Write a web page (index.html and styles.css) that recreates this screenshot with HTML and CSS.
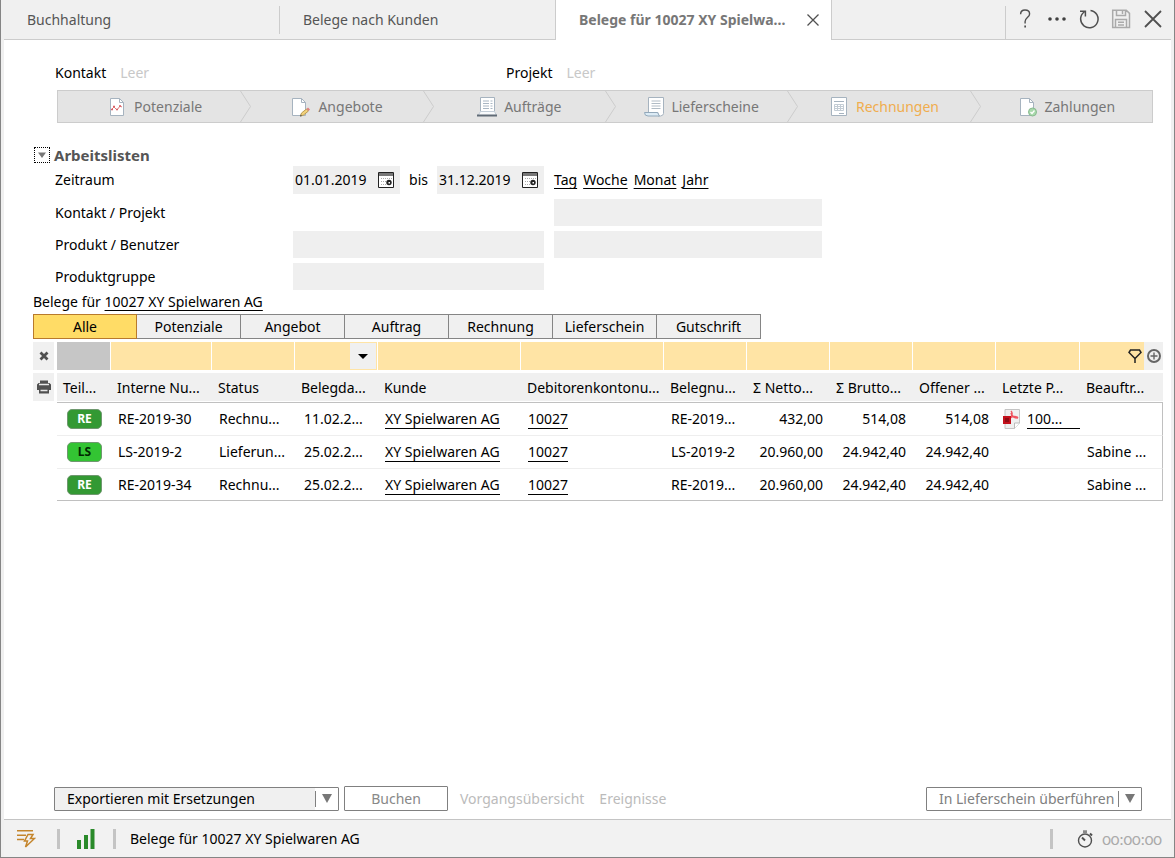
FILE: index.html
```html
<!DOCTYPE html>
<html lang="de">
<head>
<meta charset="utf-8">
<title>Belege für 10027 XY Spielwaren AG</title>
<link rel="stylesheet" href="styles.css">
</head>
<body>
<div class="window">
<header class="topbar">
  <nav class="tabs">
    <a class="tab" href="#buchhaltung">Buchhaltung</a>
    <a class="tab tab-divided" href="#kunden">Belege nach Kunden</a>
    <div class="tab tab-active">
      <a href="#belege">Belege für 10027 XY Spielwa...</a>
      <button class="icon-button" type="button" aria-label="Tab schließen"><svg width="14" height="14" viewBox="0 0 14 14"><path d="M1.5 1.5l11 11M12.5 1.5l-11 11" stroke="#505050" stroke-width="1.3"/></svg></button>
    </div>
  </nav>
  <div class="tools">
    <button class="icon-button tool" type="button" aria-label="Hilfe"><svg width="20" height="20" viewBox="0 0 20 20" fill="none"><path d="M5.6 5.2C5.6 2.6 7.2 1 10 1s4.6 1.500 4.600 3.900c0 3.400-4.500 4-4.500 7.600v2" stroke="#505050" stroke-width="1.4"/><path d="M9.300 16.600h1.700v2H9.300z" fill="#505050"/></svg></button>
    <button class="icon-button tool" type="button" aria-label="Mehr"><svg width="20" height="20" viewBox="0 0 20 20" fill="#404040"><circle cx="3" cy="10" r="1.800"/><circle cx="10" cy="10" r="1.800"/><circle cx="17" cy="10" r="1.800"/></svg></button>
    <button class="icon-button tool" type="button" aria-label="Aktualisieren"><svg width="20" height="20" viewBox="0 0 20 20" fill="none" stroke="#505050" stroke-width="1.500"><path d="M11.500 1.400A8.700 8.700 0 1 1 5.200 3M1 2.200h5.400v5.400"/></svg></button>
    <button class="icon-button tool" type="button" aria-label="Speichern"><svg width="20" height="20" viewBox="0 0 20 20" fill="none" stroke="#aaa" stroke-width="1.500"><path d="M1.700 1.200h13.600l3.200 3.200v14H1.700zM5.500 1.200v5.300h9V1.200M11.500 2v3M4.500 18.400v-7.900h11v7.900M7 13.300h6M7 16h6"/></svg></button>
    <button class="icon-button tool" type="button" aria-label="Fenster schließen"><svg width="20" height="20" viewBox="0 0 20 20"><path d="M2 2l16 16M18 2L2 18" stroke="#505050" stroke-width="1.800"/></svg></button>
  </div>
</header>

<main class="work">
  <div class="context">
    <div class="context-item"><span>Kontakt</span><span class="empty">Leer</span></div>
    <div class="context-item"><span>Projekt</span><span class="empty">Leer</span></div>
  </div>

  <nav class="process">
    <a class="step" href="#potenziale"><span class="step-body"><svg width="20" height="20" viewBox="0 0 20 20" fill="none"><path d="M3.500 1.500h9l4 4v13h-13z" fill="#fff" stroke="#a6b3bf"/><path d="M12.500 1.500v4h4" stroke="#a6b3bf"/><path d="M4 13l3-3 3 3 3-4 2 1" stroke="#e07878"/><path d="M4 12.500h2M6 9.500h2M9 12.500h2M12 9h2" stroke="#d85f66" stroke-width="1.500"/></svg>Potenziale</span></a>
    <a class="step" href="#angebote"><svg class="chevron" viewBox="0 0 11 31"><path d="M.5 0l10 15.500-10 15.500" fill="none" stroke="#ccc"/></svg><span class="step-body"><svg width="20" height="20" viewBox="0 0 20 20" fill="none"><path d="M1.500 1.500h9l4 4v13h-13z" fill="#fff" stroke="#a6b3bf"/><path d="M10.500 1.500v4h4" stroke="#a6b3bf"/><path d="M9.500 19l1-3 5-4 2 2-5 4z" fill="#f3d37c" stroke="#b99a50"/><path d="M15.500 12l1.500-1.500 2 2-1.500 1.500z" fill="#de8080"/><path d="M9 19.500l.6-2 1.400 1.400z" fill="#555"/></svg>Angebote</span></a>
    <a class="step" href="#auftraege"><svg class="chevron" viewBox="0 0 11 31"><path d="M.5 0l10 15.500-10 15.500" fill="none" stroke="#ccc"/></svg><span class="step-body"><svg width="20" height="20" viewBox="0 0 20 20" fill="none"><path d="M3.500.5h14v14h-14z" fill="#fff" stroke="#a6b3bf"/><path d="M6 4h6M6 6.500h6M6 9h6M6 11.500h6M13.500 4h2M13.500 6.500h2M13.500 9h2M13.500 11.500h2" stroke="#a9b6c3"/><path d="M3.500 14.500h14l2 4H1z" fill="#f8fafc" stroke="#c4ced8"/><path d="M0 18.500h20" stroke="#606b76" stroke-width="2"/></svg>Aufträge</span></a>
    <a class="step" href="#lieferscheine"><svg class="chevron" viewBox="0 0 11 31"><path d="M.5 0l10 15.500-10 15.500" fill="none" stroke="#ccc"/></svg><span class="step-body"><svg width="20" height="20" viewBox="0 0 20 20" fill="none"><path d="M4.500.5h15v16q0 2-3 2.500H14V15.500H4.500z" fill="#fff" stroke="#a6b3bf"/><path d="M7.500 4h9M7.500 6.500h9M7.500 9h9M7.500 11.500h9" stroke="#b0bbc5"/><path d="M.5 15.500h13l2 3.500H4Q.5 19 .5 15.500z" fill="#dcebf5" stroke="#92a8ba"/></svg>Lieferscheine</span></a>
    <a class="step step-current" href="#rechnungen"><svg class="chevron" viewBox="0 0 11 31"><path d="M.5 0l10 15.500-10 15.500" fill="none" stroke="#ccc"/></svg><span class="step-body"><svg width="20" height="20" viewBox="0 0 20 20" fill="none"><path d="M2.500.5h15v18h-15z" fill="#fff" stroke="#a6b3bf"/><path d="M5 4.500h10M10 16.500h5" stroke="#a6b3bf"/><path d="M5.500 7.500h9v6h-9zM5.500 9.500h9M5.500 11.500h9M8.500 7.500v6M11.500 7.500v6" stroke="#c3ccd4"/></svg>Rechnungen</span></a>
    <a class="step" href="#zahlungen"><svg class="chevron" viewBox="0 0 11 31"><path d="M.5 0l10 15.500-10 15.500" fill="none" stroke="#ccc"/></svg><span class="step-body"><svg width="20" height="20" viewBox="0 0 20 20" fill="none"><path d="M2.500 1.500h9l4 4v13h-13z" fill="#fff" stroke="#a6b3bf"/><path d="M11.500 1.500v4h4" stroke="#a6b3bf"/><circle cx="14.500" cy="15" r="4" fill="#a9d9ac" stroke="#89bb90"/><path d="M12.500 15l1.500 1.500 2.500-3" stroke="#fff" stroke-width="1.300"/></svg>Zahlungen</span></a>
  </nav>

  <section class="worklists">
    <h2 class="section-title"><button class="disclosure" type="button" aria-label="Arbeitslisten einklappen" aria-expanded="true"><svg width="8" height="6" viewBox="0 0 8 6"><path d="M0 .5h8L4 6z" fill="#777"/></svg></button>Arbeitslisten</h2>
    <form class="filters">
      <label class="filter-label" for="from">Zeitraum</label>
      <div class="period">
        <div class="date"><input id="from" type="text" value="01.01.2019"><button class="icon-button" type="button" aria-label="Startdatum wählen"><svg width="16" height="16" viewBox="0 0 16 16"><path d="M.5.5h15v15H.5z" fill="#fff" stroke="#222"/><path d="M1 1h14v3H1z" fill="#777"/><path d="M3 6.500h11M3 9.500h5M3 12.500h5" stroke="#aaa" stroke-dasharray="1 1"/><circle cx="11" cy="10.500" r="2.700" fill="#222"/><path d="M10.500 10h1.500v1.500h-1.500z" fill="#fff"/></svg></button></div>
        <label for="to">bis</label>
        <div class="date"><input id="to" type="text" value="31.12.2019"><button class="icon-button" type="button" aria-label="Enddatum wählen"><svg width="16" height="16" viewBox="0 0 16 16"><path d="M.5.5h15v15H.5z" fill="#fff" stroke="#222"/><path d="M1 1h14v3H1z" fill="#777"/><path d="M3 6.500h11M3 9.500h5M3 12.500h5" stroke="#aaa" stroke-dasharray="1 1"/><circle cx="11" cy="10.500" r="2.700" fill="#222"/><path d="M10.500 10h1.500v1.500h-1.500z" fill="#fff"/></svg></button></div>
      </div>
      <div class="ranges"><a href="#tag">Tag</a><a href="#woche">Woche</a><a href="#monat">Monat</a><a href="#jahr">Jahr</a></div>

      <label class="filter-label" for="project">Kontakt / Projekt</label>
      <span></span>
      <input class="field" id="project" type="text">

      <label class="filter-label" for="product">Produkt / Benutzer</label>
      <input class="field" id="product" type="text">
      <input class="field" type="text" aria-label="Benutzer">

      <label class="filter-label" for="group">Produktgruppe</label>
      <input class="field" id="group" type="text">
    </form>
  </section>

  <section class="documents">
    <div class="documents-title">Belege für <a href="#kunde">10027 XY Spielwaren AG</a></div>
    <div class="kinds">
      <button class="kind kind-active" type="button">Alle</button>
      <button class="kind" type="button">Potenziale</button>
      <button class="kind" type="button">Angebot</button>
      <button class="kind" type="button">Auftrag</button>
      <button class="kind" type="button">Rechnung</button>
      <button class="kind" type="button">Lieferschein</button>
      <button class="kind" type="button">Gutschrift</button>
    </div>
    <div class="grid">
      <div class="gutter">
        <button class="icon-button gutter-button" type="button" aria-label="Filter löschen"><svg width="10" height="10" viewBox="0 0 10 10"><path d="M1.500 1.500l7 7M8.500 1.500l-7 7" stroke="#505050" stroke-width="2.800"/></svg></button>
        <button class="icon-button gutter-button" type="button" aria-label="Drucken"><svg width="14" height="14" viewBox="0 0 14 14"><path d="M3 .5h8V3h1.500L14 4.500V10h-2v3.500H2V10H0V4.500L1.500 3H3z" fill="#505050"/><path d="M2 4.500h10M3.500 10.500h7" stroke="#e8e8e8" stroke-width="1.500"/></svg></button>
      </div>
      <table class="table">
        <colgroup><col class="c-type"><col class="c-number"><col class="c-std"><col class="c-std"><col class="c-wide"><col class="c-wide"><col class="c-std"><col class="c-std"><col class="c-std"><col class="c-std"><col class="c-file"><col></colgroup>
        <thead>
          <tr class="search">
            <td class="search-off"></td>
            <td><input type="text" aria-label="Filter Interne Nummer"></td>
            <td><input type="text" aria-label="Filter Status"></td>
            <td><div class="search-cell"><input type="text" aria-label="Filter Belegdatum"><button class="icon-button search-menu" type="button" aria-label="Datum wählen"><svg width="10" height="5" viewBox="0 0 10 5"><path d="M0 0h10L5 5z" fill="#000"/></svg></button></div></td>
            <td><input type="text" aria-label="Filter Kunde"></td>
            <td><input type="text" aria-label="Filter Debitorenkonto"></td>
            <td><input type="text" aria-label="Filter Belegnummer"></td>
            <td><input type="text" aria-label="Filter Netto"></td>
            <td><input type="text" aria-label="Filter Brutto"></td>
            <td><input type="text" aria-label="Filter Offener Betrag"></td>
            <td><input type="text" aria-label="Filter Letzte"></td>
            <td class="search-last"><div class="search-cell"><input type="text" aria-label="Filter Beauftragter"><button class="icon-button funnel" type="button" aria-label="Filtern"><svg width="14" height="14" viewBox="0 0 14 14" fill="none" stroke="#222" stroke-width="1.500"><path d="M2.500 1h9L13 3.500 7.500 9h-1L1 3.500zM7 9v5"/></svg></button><button class="icon-button add" type="button" aria-label="Hinzufügen"><svg width="14" height="14" viewBox="0 0 14 14" fill="none" stroke="#666"><circle cx="7" cy="7" r="6" stroke-width="2"/><path d="M7 3.500v7M3.500 7h7" stroke-width="1.400"/></svg></button></div></td>
          </tr>
          <tr>
            <th>Teil...</th><th>Interne Nu...</th><th>Status</th><th>Belegda...</th><th>Kunde</th><th>Debitorenkontonu...</th><th>Belegnu...</th><th>Σ Netto...</th><th>Σ Brutto...</th><th>Offener ...</th><th>Letzte P...</th><th>Beauftr...</th>
          </tr>
        </thead>
        <tbody>
          <tr>
            <td class="type"><span class="badge">RE</span></td><td>RE-2019-30</td><td>Rechnu...</td><td class="day">11.02.2...</td><td><a href="#kunde">XY Spielwaren AG</a></td><td><a href="#konto">10027</a></td><td>RE-2019...</td><td class="amount">432,00</td><td class="amount">514,08</td><td class="amount">514,08</td>
            <td class="file"><div class="file-cell"><svg width="18" height="20" viewBox="0 0 18 20"><path d="M2 .5h14.500V14l-5 5.500H2z" fill="#efefef" stroke="#c4c4c4"/><path d="M16.500 14h-5v5.500" fill="#fff" stroke="#bbb"/><path d="M8 2c2 2 1 5-1 8M8 4c1 4 4 5 7 5M7 9c3-2 6-2 8 0" fill="none" stroke="#f05560" stroke-width="1.500"/><path d="M0 7h8v8H0z" fill="#c4101c"/><path d="M2 9h4v4H2z" fill="#8e0b14"/></svg><a class="file-link" href="#pdf">100...</a></div></td><td></td>
          </tr>
          <tr>
            <td class="type"><span class="badge badge-ls">LS</span></td><td>LS-2019-2</td><td>Lieferun...</td><td class="day">25.02.2...</td><td><a href="#kunde">XY Spielwaren AG</a></td><td><a href="#konto">10027</a></td><td>LS-2019-2</td><td class="amount">20.960,00</td><td class="amount">24.942,40</td><td class="amount">24.942,40</td><td></td><td>Sabine ...</td>
          </tr>
          <tr>
            <td class="type"><span class="badge">RE</span></td><td>RE-2019-34</td><td>Rechnu...</td><td class="day">25.02.2...</td><td><a href="#kunde">XY Spielwaren AG</a></td><td><a href="#konto">10027</a></td><td>RE-2019...</td><td class="amount">20.960,00</td><td class="amount">24.942,40</td><td class="amount">24.942,40</td><td></td><td>Sabine ...</td>
          </tr>
        </tbody>
      </table>
    </div>
  </section>

  <div class="actions">
    <div class="split split-export"><button class="split-main" type="button">Exportieren mit Ersetzungen</button><button class="split-more" type="button" aria-label="Weitere Exporte"><svg width="10" height="9" viewBox="0 0 10 9"><path d="M0 0h10L5 9z" fill="#777"/></svg></button></div>
    <button class="book" type="button" disabled>Buchen</button>
    <button class="flat" type="button" disabled>Vorgangsübersicht</button>
    <button class="flat" type="button" disabled>Ereignisse</button>
    <div class="split split-transfer"><button class="split-main" type="button">In Lieferschein überführen</button><button class="split-more" type="button" aria-label="Weitere Ziele"><svg width="10" height="9" viewBox="0 0 10 9"><path d="M0 0h10L5 9z" fill="#777"/></svg></button></div>
  </div>
</main>

<footer class="status">
  <svg class="jobs" width="20" height="20" viewBox="0 0 20 20" fill="none" stroke="#c4852c" stroke-width="1.500"><path d="M1 1.800h16M1 6.200h9M1 10.500h7M12 5.500h5l-2.500 4h4L9.500 18l2-6H8.500z"/></svg>
  <span class="bar"></span>
  <svg class="signal" width="18" height="20" viewBox="0 0 18 20" fill="#2a8a2a"><path d="M0 11h4v9H0zM7 6h4v14H7zM13.500 0h4v20h-4z"/></svg>
  <span class="bar"></span>
  <span class="status-text">Belege für 10027 XY Spielwaren AG</span>
  <span class="bar"></span>
  <svg class="stopwatch" width="16" height="18" viewBox="0 0 16 18" fill="none" stroke="#505050" stroke-width="1.400"><circle cx="8" cy="10.500" r="6.500"/><path d="M6 1h4M6 2.500h4" stroke="#888"/><path d="M5 7.500l3 3M13 3.500l2 2" stroke-width="2"/></svg>
  <span class="clock">00:00:00</span>
</footer>
</div>
</body>
</html>
```
FILE: styles.css
```css
* { box-sizing: border-box; }

body {
  margin: 0;
  font: 14px/20px "Noto Sans", "Open Sans", sans-serif;
  color: #000;
}

button, input { font: inherit; color: inherit; }
button { padding: 0; cursor: pointer; }
input { min-width: 0; border: 0; padding: 0; background: none; }
a { color: inherit; text-decoration: none; }
svg { display: block; flex: none; }

.window {
  min-height: 100vh;
  display: flex;
  flex-direction: column;
  padding: 0 3px;
  background: #f0f0f0;
  border: solid #858585;
  border-width: 0 1px 1px;
}

.icon-button {
  display: flex;
  align-items: center;
  justify-content: center;
  border: 0;
  background: none;
}

/* Top bar */
.topbar {
  display: flex;
  height: 40px;
  background: linear-gradient(#ccc, #ccc) bottom / 100% 1px no-repeat;
  color: #555;
}
.tabs { display: flex; flex: 1; min-width: 0; }
.tab {
  flex: 0 1 276px;
  min-width: 0;
  display: flex;
  align-items: center;
  padding: 0 23px;
  white-space: nowrap;
}
.tab:first-child { flex-basis: 275px; }
.tab-divided { padding-left: 24px; background: linear-gradient(#ccc, #ccc) 0 6px / 1px 28px no-repeat; }
.tab-active {
  flex-basis: 277px;
  justify-content: space-between;
  padding-right: 11px;
  background: #fff;
  border: solid #ccc;
  border-width: 0 1px;
  font-weight: bold;
  color: #777;
}
.tools {
  display: flex;
  margin-top: 6px;
  padding: 0 2px 8px 3px;
  border-left: 1px solid #ccc;
}
.tool { width: 32px; }

/* Work area */
.work {
  flex: 1;
  display: flex;
  flex-direction: column;
  padding: 23px 8px 8px 29px;
  background: #fff;
}
.context {
  display: grid;
  grid-template-columns: 451px 1fr;
  padding-left: 22px;
}
.context-item { display: flex; gap: 14px; }
.empty { color: #c8c8c8; }

.process {
  display: flex;
  height: 33px;
  margin: 7px 10px 22px 24px;
  border: 1px solid #ccc;
  background: #e4e4e4;
  color: #777;
}
.step { flex: 1 1 0; min-width: 0; display: flex; }
.step-body {
  flex: 1;
  display: flex;
  align-items: center;
  justify-content: center;
  gap: 7px;
}
.step:first-child .step-body { padding-left: 11px; }
.step-current { color: #f0ad4e; }
.chevron { width: 11px; height: 31px; }

.section-title {
  display: flex;
  align-items: center;
  gap: 4px;
  margin: 0;
  padding-left: 1px;
  font-size: 15px;
  color: #555;
}
.disclosure {
  display: flex;
  align-items: center;
  justify-content: center;
  width: 16px;
  height: 16px;
  border: 1px dotted #000;
  background: #fff;
}
.filters {
  display: grid;
  grid-template-columns: 228px 251px 268px;
  grid-template-rows: 28px repeat(3, 27px);
  gap: 5px 10px;
  align-items: center;
  margin-top: 1px;
  padding-left: 22px;
}
.period { display: flex; justify-content: space-between; align-items: center; }
.date {
  display: flex;
  align-items: center;
  justify-content: space-between;
  width: 107px;
  height: 28px;
  padding: 0 6px 0 2px;
  background: #efefef;
}
.date input { width: 80px; }
.ranges { display: flex; gap: 6px; }
.ranges a, .documents-title a { text-decoration: underline; text-underline-offset: 3px; }
.field { height: 27px; background: #efefef; }

/* Documents */
.documents-title { margin-top: 2px; }
.kinds { display: flex; margin: 2px 0 3px; }
.kind {
  width: 105px;
  height: 25px;
  margin-right: -1px;
  border: 1px solid #858585;
  background: #f0f0f0;
}
.kind-active { position: relative; border-color: #b87a2c; background: #ffdc66; }
.kind:first-child { width: 104px; }

.grid { display: flex; gap: 3px; }
.gutter { display: flex; flex-direction: column; gap: 3px; }
.gutter-button { width: 21px; height: 28px; background: #f0f0f0; }
.table {
  flex: 1;
  table-layout: fixed;
  width: 100%;
  border-collapse: separate;
  border-spacing: 0;
}
.c-type { width: 54px; }
.c-number { width: 101px; }
.c-std { width: 83px; }
.c-wide { width: 143px; }
.c-file { width: 84px; }
.table th, .table td { padding: 0; white-space: nowrap; text-align: left; font-weight: normal; }
.search td {
  height: 31px;
  border: solid #fff;
  border-width: 0 1px 3px 0;
  background: #ffe4a5;
}
.search .search-off { background: #c6c6c6; }
.search .search-last { border-right: 0; }
.search input { display: block; width: 100%; height: 28px; }
.search-cell { display: flex; align-items: center; }
.search-menu { flex: none; width: 26px; height: 26px; margin-right: 1px; background: #f0f0f0; }
.funnel { flex: none; width: 18px; height: 28px; }
.add { flex: none; width: 19px; height: 28px; background: #f0f0f0; }
.table th {
  height: 30px;
  padding: 0 0 0 6px;
  border-bottom: 1px solid #c0c0c0;
  background: #f0f0f0;
  box-shadow: inset 0 -1px #fff;
}
.table tbody td {
  height: 33px;
  padding-left: 7px;
  border-bottom: 1px solid #eee;
}
.table tbody tr:last-child td { height: 32px; border-bottom-color: #c0c0c0; }
.table tbody td:last-child { border-right: 1px solid #c0c0c0; }
.table tbody .day { padding-left: 9px; }
.table tbody .amount { padding: 0 7px 0 0; text-align: right; }
.table tbody a { display: inline-block; line-height: 18px; border-bottom: 1px solid #000; }
.table tbody .type { padding-left: 10px; }
.badge {
  display: block;
  width: 35px;
  height: 20px;
  border: 1px solid #6f986f;
  border-radius: 5px;
  background: #339933;
  color: #fff;
  font-size: 12px;
  font-weight: bold;
  line-height: 18px;
  text-align: center;
}
.badge-ls { background: #33c433; color: #002800; }
.file-cell { display: flex; align-items: center; gap: 6px; }
.file-link { flex: 1; }

/* Actions */
.actions {
  display: flex;
  align-items: center;
  margin-top: auto;
  padding: 0 21px;
}
.split {
  display: flex;
  height: 24px;
  border: 1px solid #808080;
  border-radius: 1px;
}
.split button { border: 0; background: none; }
.split .split-main { flex: 1; min-width: 0; padding-left: 12px; text-align: left; white-space: nowrap; }
.split .split-more {
  flex: none;
  display: flex;
  align-items: center;
  justify-content: center;
  width: 23px;
  margin: 3px 0;
  border-left: 1px solid #808080;
}
.split-export { width: 285px; }
.split-export .split-main { background: #f0f0f0; }
.split-transfer { width: 216px; margin-left: auto; color: #808080; }
.book {
  width: 104px;
  height: 25px;
  margin: 0 12px 0 5px;
  border: 1px solid #808080;
  border-radius: 1px;
  background: #fff;
  color: #888;
}
.flat { margin-right: 15px; border: 0; background: none; color: #bbb; }

/* Status bar */
.status {
  display: flex;
  align-items: center;
  height: 38px;
  padding: 0 9px 0 12px;
  border-top: 1px solid #c4c4c4;
  background: #f2f2f2;
}
.bar { width: 3px; height: 20px; margin: 0 14px 0 18px; background: #c4c4c4; }
.jobs { margin-right: 3px; }
.signal { margin-left: 3px; }
.status-text { margin-right: auto; }
.stopwatch { margin: 0 9px 0 10px; }
.clock { font: 16px/20px Lato, sans-serif; font-variant-numeric: oldstyle-nums; color: #aaa; }
```
